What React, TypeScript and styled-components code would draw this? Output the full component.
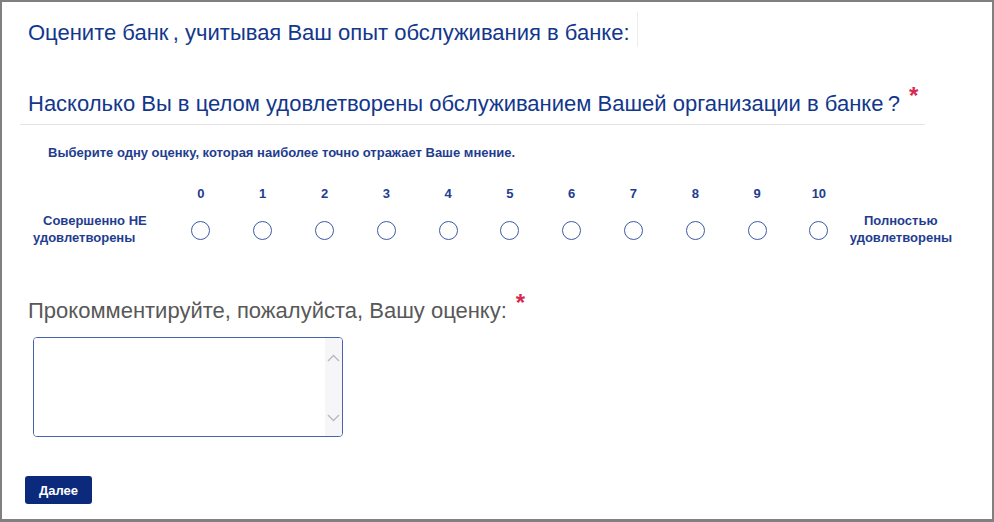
import React, { useState } from 'react';
import styled, { createGlobalStyle } from 'styled-components';

const GlobalStyle = createGlobalStyle`
  html, body {
    margin: 0;
    padding: 0;
    background: #ffffff;
  }
  body {
    font-family: "Liberation Sans", Arial, sans-serif;
  }
`;

const Page = styled.div`
  box-sizing: border-box;
  width: 994px;
  height: 522px;
  border: 2px solid #808080;
  border-bottom-width: 3px;
  padding: 10px 0 0 0;
  background: #ffffff;
  display: flex;
  flex-direction: column;
`;

const Heading = styled.div`
  align-self: flex-start;
  margin-left: 26px;
  padding: 8px 7px 2px 0;
  border-right: 1px solid #ececec;
  font-size: 22px;
  line-height: 25px;
  color: #12378c;
`;

const Question = styled.div`
  margin: 44px 0 0 18px;
  width: 897px;
  padding: 0 0 8px 8px;
  border-bottom: 1px solid #e3e3e8;
  font-size: 22px;
  line-height: 25px;
  color: #12378c;
`;

const Required = styled.span`
  color: #d9284f;
  font-size: 24px;
  line-height: 0;
  font-weight: bold;
  position: relative;
  top: -7px;
  margin-left: 9px;
`;

const Hint = styled.div`
  margin: 20px 0 0 46px;
  font-size: 13px;
  font-weight: bold;
  color: #1f3d8f;
  line-height: 15px;
`;

const Scale = styled.div`
  margin: 21px 0 0 0;
  display: grid;
  grid-template-columns: 168px repeat(11, 61.8px) 102px;
  grid-template-rows: 24px 50px;
  align-items: center;
  font-size: 13px;
  font-weight: bold;
  color: #1f3d8f;
`;

const Num = styled.div`
  text-align: center;
`;

const EdgeLabel = styled.div<{ $side: 'left' | 'right' }>`
  line-height: 17px;
  text-align: ${(p) => (p.$side === 'left' ? 'left' : 'center')};
  padding-left: ${(p) => (p.$side === 'left' ? '31px' : '0')};
  text-indent: ${(p) => (p.$side === 'left' ? '10px' : '0')};
  margin-top: -3px;
`;

const RadioCell = styled.label`
  display: flex;
  justify-content: center;
  align-items: center;
  cursor: pointer;
`;

const Radio = styled.span<{ $on: boolean }>`
  box-sizing: border-box;
  width: 19px;
  height: 19px;
  border-radius: 50%;
  border: 1.5px solid #3d59a6;
  background: ${(p) => (p.$on ? 'radial-gradient(circle, #3d59a6 0 4px, #fff 5px)' : '#fff')};
`;

const CommentLabel = styled.div`
  margin: 43px 0 0 26px;
  font-size: 22px;
  line-height: 25px;
  color: #585858;
`;

const Box = styled.div`
  margin: 14px 0 0 31px;
  box-sizing: border-box;
  width: 310px;
  height: 100px;
  border: 1.5px solid #4862ad;
  border-radius: 4px;
  display: flex;
  overflow: hidden;
`;

const Area = styled.textarea`
  flex: 1;
  border: none;
  outline: none;
  resize: none;
  padding: 4px 6px;
  font-family: "Liberation Sans", Arial, sans-serif;
  font-size: 13px;
  overflow: hidden;
`;

const ScrollBar = styled.div`
  width: 17px;
  background: #f6f6f8;
  display: flex;
  flex-direction: column;
  justify-content: space-between;
  align-items: center;
  padding: 16px 0 14px 0;
`;

const Button = styled.button`
  margin: 39px 0 0 23px;
  align-self: flex-start;
  width: 67px;
  height: 28px;
  background: #0b2a7c;
  color: #ffffff;
  border: none;
  border-radius: 3px;
  font-family: "Liberation Sans", Arial, sans-serif;
  font-size: 13px;
  font-weight: bold;
  cursor: pointer;
`;

const Chevron = ({ up }: { up?: boolean }) => (
  <svg width="13" height="8" viewBox="0 0 13 8">
    <path
      d={up ? 'M1 7 L6.5 1.5 L12 7' : 'M1 1 L6.5 6.5 L12 1'}
      fill="none"
      stroke="#b9b9bf"
      strokeWidth="1.4"
    />
  </svg>
);

const App: React.FC = () => {
  const [score, setScore] = useState<number | null>(null);
  const [comment, setComment] = useState('');
  const values = Array.from({ length: 11 }, (_, i) => i);

  return (
    <>
      <GlobalStyle />
      <Page>
        <Heading>Оцените банк{'\u2009'}, учитывая Ваш опыт обслуживания в банке:</Heading>
        <Question>
          Насколько Вы в целом удовлетворены обслуживанием Вашей организации в банке{'\u2009'}?
          <Required>*</Required>
        </Question>
        <Hint>Выберите одну оценку, которая наиболее точно отражает Ваше мнение.</Hint>
        <Scale>
          <div />
          {values.map((v) => (
            <Num key={v}>{v}</Num>
          ))}
          <div />
          <EdgeLabel $side="left">
            Совершенно НЕ
            <br />
            удовлетворены
          </EdgeLabel>
          {values.map((v) => (
            <RadioCell key={v} onClick={() => setScore(v)}>
              <Radio $on={score === v} />
            </RadioCell>
          ))}
          <EdgeLabel $side="right">
            Полностью
            <br />
            удовлетворены
          </EdgeLabel>
        </Scale>
        <CommentLabel>
          Прокомментируйте, пожалуйста, Вашу оценку:
          <Required>*</Required>
        </CommentLabel>
        <Box>
          <Area value={comment} onChange={(e) => setComment(e.target.value)} />
          <ScrollBar>
            <Chevron up />
            <Chevron />
          </ScrollBar>
        </Box>
        <Button type="button">Далее</Button>
      </Page>
    </>
  );
};

export default App;
